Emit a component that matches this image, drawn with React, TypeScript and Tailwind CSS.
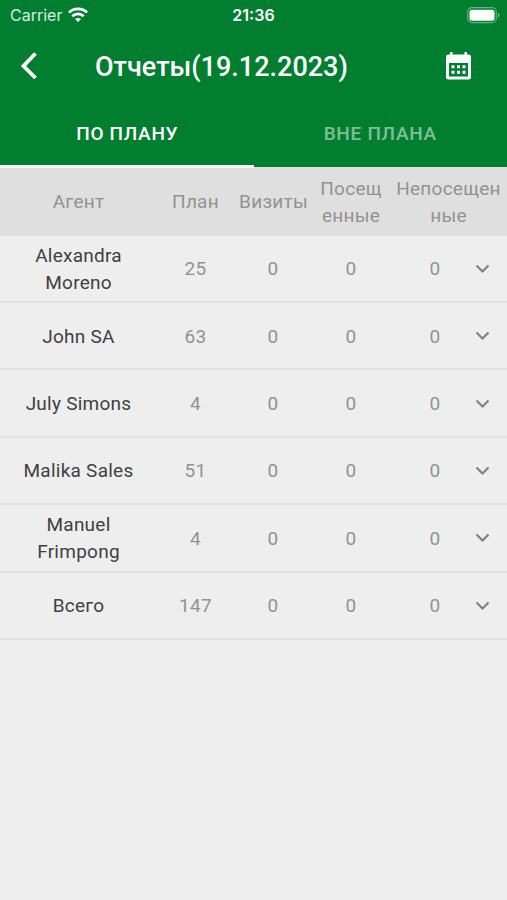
const rows = [
  ["Alexandra Moreno", "25"],
  ["John SA", "63"],
  ["July Simons", "4"],
  ["Malika Sales", "51"],
  ["Manuel Frimpong", "4"],
  ["Всего", "147"],
];
const grid = "grid grid-cols-[156px_78px_78px_78px_90px_27px] items-center text-center text-[19px] leading-[27px] tracking-[0.25px]";

export default function App() {
  return (
    <div className="h-[900px] w-[507px] overflow-hidden bg-[#eeeeee] font-[Roboto,sans-serif]">
      <header className="h-[167px] bg-[#017e30] text-white">
        <div className="grid h-[30px] grid-cols-3 items-center px-[10px] font-[Inter,sans-serif] text-[16px]">
          <div className="flex items-center gap-[6px] text-white/85">
            <span>Carrier</span>
            <svg width="20" height="16" viewBox="0 0 20 16" fill="none" stroke="white" strokeWidth="2.8">
              <path d="M1 5.4C6 .7 14 .7 19 5.4M4.3 9.2c3.3-3 8.1-3 11.4 0" />
              <path d="m10 15-3-3c1.8-1.5 4.2-1.5 6 0Z" fill="white" stroke="none" />
            </svg>
          </div>
          <div className="text-center font-semibold">21:36</div>
          <div className="-mr-[4px] flex justify-end">
            <svg width="34" height="17" viewBox="0 0 34 17">
              <rect x=".7" y=".7" width="28.6" height="15" rx="4.5" fill="none" stroke="white" strokeOpacity=".4" strokeWidth="1.2" />
              <rect x="2.5" y="2.7" width="25" height="11" rx="2.5" fill="white" />
              <path d="M31 5.8c2 .7 2 4.3 0 5Z" fill="white" fillOpacity=".45" />
            </svg>
          </div>
        </div>
        <div className="flex h-[72px] items-center pr-[35px] pl-[20px]">
          <svg width="20" height="28" viewBox="0 0 20 28" fill="none" stroke="white" strokeWidth="3.8"><path d="M15.5 1.5 3.5 14l12 12" /></svg>
          <h1 className="mt-[2px] ml-[55px] text-[27px] leading-[32px] font-medium whitespace-nowrap">Отчеты(19.12.2023)</h1>
          <svg className="ml-auto" width="27" height="28" viewBox="0 0 27 28">
            <path fill="white" fillRule="evenodd" d="M5 0h2.5v2.5h12V0H22v2.5h1.5A2.5 2.5 0 0 1 26 5v20a2.5 2.5 0 0 1-2.5 2.5h-20A2.5 2.5 0 0 1 1 25V5a2.5 2.5 0 0 1 2.5-2.5H5ZM4 11v13.5h19V11Z" />
            <path fill="white" d="M6.5 13.3h3v3h-3zm5.5 0h3v3h-3zm5.5 0h3v3h-3zm-11 5.4h3v3h-3zm5.5 0h3v3h-3zm5.5 0h3v3h-3z" />
          </svg>
        </div>
        <nav className="grid h-[65px] grid-cols-2 text-center text-[19px] leading-[64px] font-medium tracking-[0.7px]">
          <div className="h-[66px] border-b-[3px] border-[#f5f5f5] pl-px">ПО ПЛАНУ</div>
          <div className="text-white/50">ВНЕ ПЛАНА</div>
        </nav>
      </header>
      <main>
        <div className={`${grid} h-[68.6px] bg-[#dfdfdf] pt-px text-[#929292]`}>
          <div className="pl-px">Агент</div><div className="pl-px">План</div><div className="pl-px">Визиты</div><div>Посещ<br />енные</div>
          <div className="col-span-2">Непосещен<br />ные</div>
        </div>
        {rows.map(([name, plan]) => (
          <div key={name} className={`${grid} h-[67.4px] border-b-2 border-[#e2e2e2] pt-px text-[#929292]`}>
            <div className="pr-[19px] pl-5 text-[#404040]">{name}</div>
            <div className="pl-px">{plan}</div><div>0</div><div>0</div><div>0</div>
            <svg className="-ml-[5px]" width="15" height="10" viewBox="0 0 15 10" fill="none" stroke="#808080" strokeWidth="2.2"><path d="m1.5 1.5 6 6 6-6" /></svg>
          </div>
        ))}
      </main>
    </div>
  );
}
